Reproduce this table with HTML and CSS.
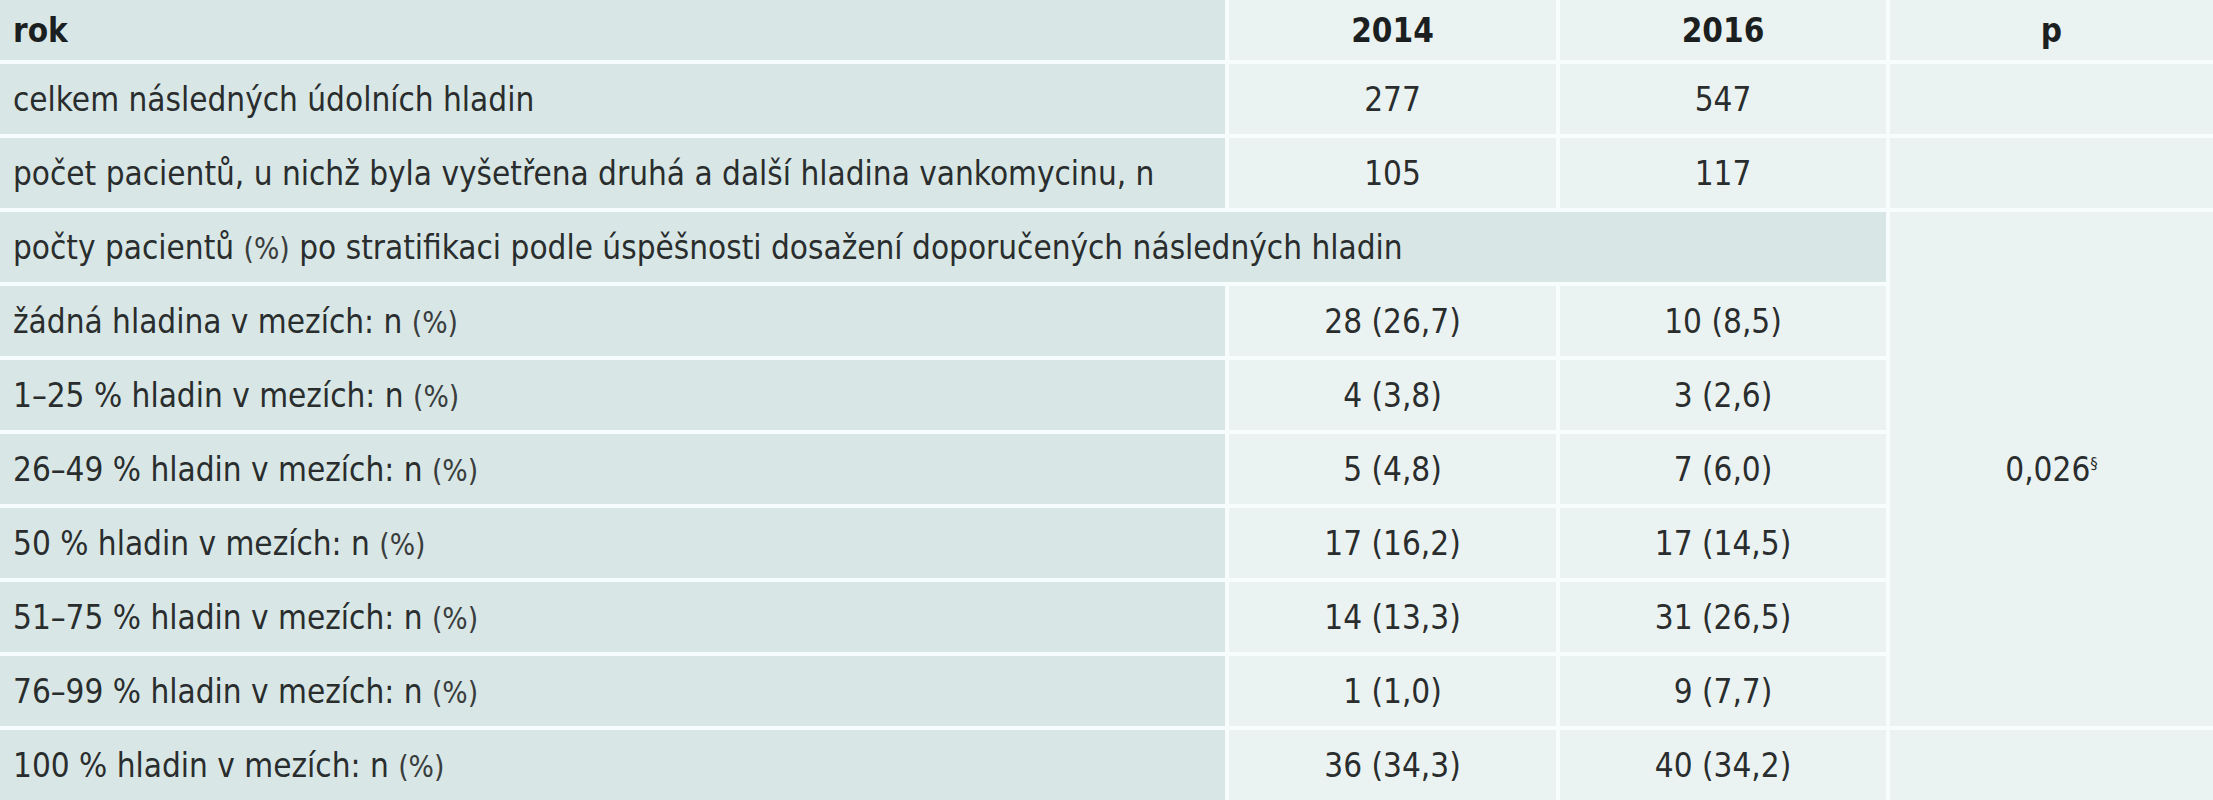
FILE: index.html
```html
<!DOCTYPE html>
<html lang="cs">
<head>
<meta charset="utf-8">
<title>Tabulka</title>
<link rel="stylesheet" href="styles.css">
</head>
<body>
<div class="table">
  <div class="cell label head"><span>rok</span></div>
  <div class="cell num head"><span>2014</span></div>
  <div class="cell num head"><span>2016</span></div>
  <div class="cell num head"><span>p</span></div>

  <div class="cell label"><span>celkem následných údolních hladin</span></div>
  <div class="cell num"><span>277</span></div>
  <div class="cell num"><span>547</span></div>
  <div class="cell num"></div>

  <div class="cell label"><span>počet pacientů, u nichž byla vyšetřena druhá a další hladina vankomycinu, n</span></div>
  <div class="cell num"><span>105</span></div>
  <div class="cell num"><span>117</span></div>
  <div class="cell num"></div>

  <div class="cell label span3"><span>počty pacientů <span class="par">(%)</span> po stratifikaci podle úspěšnosti dosažení doporučených následných hladin</span></div>
  <div class="cell num pval"><span>0,026<sup>§</sup></span></div>

  <div class="cell label"><span>žádná hladina v mezích: n <span class="par">(%)</span></span></div>
  <div class="cell num"><span>28 (26,7)</span></div>
  <div class="cell num"><span>10 (8,5)</span></div>

  <div class="cell label"><span>1–25 % hladin v mezích: n <span class="par">(%)</span></span></div>
  <div class="cell num"><span>4 (3,8)</span></div>
  <div class="cell num"><span>3 (2,6)</span></div>

  <div class="cell label"><span>26–49 % hladin v mezích: n <span class="par">(%)</span></span></div>
  <div class="cell num"><span>5 (4,8)</span></div>
  <div class="cell num"><span>7 (6,0)</span></div>

  <div class="cell label"><span>50 % hladin v mezích: n <span class="par">(%)</span></span></div>
  <div class="cell num"><span>17 (16,2)</span></div>
  <div class="cell num"><span>17 (14,5)</span></div>

  <div class="cell label"><span>51–75 % hladin v mezích: n <span class="par">(%)</span></span></div>
  <div class="cell num"><span>14 (13,3)</span></div>
  <div class="cell num"><span>31 (26,5)</span></div>

  <div class="cell label"><span>76–99 % hladin v mezích: n <span class="par">(%)</span></span></div>
  <div class="cell num"><span>1 (1,0)</span></div>
  <div class="cell num"><span>9 (7,7)</span></div>

  <div class="cell label"><span>100 % hladin v mezích: n <span class="par">(%)</span></span></div>
  <div class="cell num"><span>36 (34,3)</span></div>
  <div class="cell num"><span>40 (34,2)</span></div>
  <div class="cell num"></div>
</div>
</body>
</html>
```

FILE: styles.css
```css
html, body {
  margin: 0;
  padding: 0;
  background: #f7fcfc;
}

.table {
  display: grid;
  grid-template-columns: 1225px 327px 326px 1fr;
  grid-template-rows: 60px repeat(10, 70px);
  gap: 4px;
  width: 2213px;
  height: 800px;
  background: #f7fcfc;
  font-family: "DejaVu Sans Condensed", "Liberation Sans Narrow", "Liberation Sans", sans-serif;
  font-size: 33px;
  color: #2a2d2d;
}

.cell {
  display: flex;
  align-items: center;
  background: #ebf3f2;
  white-space: nowrap;
}

.label {
  background: #d8e7e6;
  padding-left: 13px;
}

.num {
  justify-content: center;
}

.head {
  font-weight: bold;
  color: #1c1f1f;
}

.span3 {
  grid-column: 1 / 4;
  grid-row: 4;
}

.pval {
  grid-column: 4;
  grid-row: 4 / 11;
}

.par {
  font-size: 0.9em;
  color: #3a3d3d;
}

sup {
  font-size: 0.5em;
  line-height: 0;
  position: relative;
  top: -0.7em;
  vertical-align: baseline;
}
```
